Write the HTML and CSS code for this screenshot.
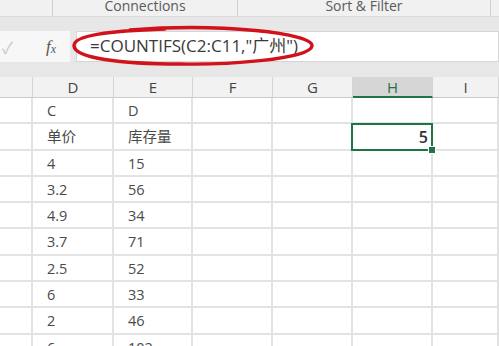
FILE: index.html
```html
<!DOCTYPE html>
<html lang="zh-CN">
<head>
  <meta charset="UTF-8" />
  <title>COUNTIFS</title>
  <link rel="stylesheet" href="styles.css">
</head>
<body>

  <div class="ribbon">
    <div class="grupo g-a"></div>
    <div class="grupo g-b">Connections</div>
    <div class="grupo g-c">Sort &amp; Filter</div>
    <div class="grupo g-d"></div>
  </div>

  <div class="barra">
    <div class="botoes">
      <span class="check">&#10003;</span>
      <span class="fx">f<sub>x</sub></span>
    </div>
    <div class="formula">=COUNTIFS(C2:C11,"广州")</div>
    <svg class="circulo" width="250" height="44" viewBox="0 0 250 44">
      <path d="M60 5 C150 -2 244 8 242 21 C240 35 150 40 110 39 C50 39 5 33 4 21 C3 10 40 6 95 4"
            fill="none" stroke="#d2121b" stroke-width="3.4" stroke-linecap="round" />
    </svg>
  </div>

  <div class="planilha">
    <div class="cab"></div>
    <div class="cab">D</div>
    <div class="cab">E</div>
    <div class="cab">F</div>
    <div class="cab">G</div>
    <div class="cab ativo">H</div>
    <div class="cab">I</div>

    <div class="cel"></div><div class="cel">C</div><div class="cel">D</div><div class="cel"></div><div class="cel"></div><div class="cel"></div><div class="cel"></div>
    <div class="cel"></div><div class="cel">单价</div><div class="cel">库存量</div><div class="cel"></div><div class="cel"></div><div class="cel sel">5<span class="alca"></span></div><div class="cel"></div>
    <div class="cel"></div><div class="cel">4</div><div class="cel">15</div><div class="cel"></div><div class="cel"></div><div class="cel"></div><div class="cel"></div>
    <div class="cel"></div><div class="cel">3.2</div><div class="cel">56</div><div class="cel"></div><div class="cel"></div><div class="cel"></div><div class="cel"></div>
    <div class="cel"></div><div class="cel">4.9</div><div class="cel">34</div><div class="cel"></div><div class="cel"></div><div class="cel"></div><div class="cel"></div>
    <div class="cel"></div><div class="cel">3.7</div><div class="cel">71</div><div class="cel"></div><div class="cel"></div><div class="cel"></div><div class="cel"></div>
    <div class="cel"></div><div class="cel">2.5</div><div class="cel">52</div><div class="cel"></div><div class="cel"></div><div class="cel"></div><div class="cel"></div>
    <div class="cel"></div><div class="cel">6</div><div class="cel">33</div><div class="cel"></div><div class="cel"></div><div class="cel"></div><div class="cel"></div>
    <div class="cel"></div><div class="cel">2</div><div class="cel">46</div><div class="cel"></div><div class="cel"></div><div class="cel"></div><div class="cel"></div>
    <div class="cel"></div><div class="cel">6</div><div class="cel">102</div><div class="cel"></div><div class="cel"></div><div class="cel"></div><div class="cel"></div>
  </div>

</body>
</html>
```

FILE: styles.css
```css
body {
  margin: 0;
  width: 499px;
  height: 346px;
  overflow: hidden;
  background: white;
  font-family: 'Open Sans', 'Noto Sans CJK SC', sans-serif;
  color: #444;
}

.ribbon {
  display: flex;
  height: 16px;
  background: #f1f1f1;
  border-bottom: 1px solid #d9d9d9;
}

.grupo {
  border-right: 1px solid #cfcfcf;
  font-size: 14px;
  line-height: 12px;
  color: #5a5a5a;
  text-align: center;
  overflow: hidden;
}

.g-a { width: 52px; }
.g-b { width: 184px; }
.g-c { width: 252px; }
.g-d { flex: 1; border-right: none; }

.barra {
  position: relative;
  display: flex;
  gap: 6px;
  height: 60px;
  padding-top: 14px;
  box-sizing: border-box;
  background: #e7e7e7;
}

.botoes {
  width: 70px;
  height: 31px;
  background: #f7f7f7;
  display: flex;
  align-items: center;
  justify-content: space-between;
  padding: 0 14px 0 2px;
  box-sizing: border-box;
}

.check {
  color: #c8c8c8;
  font-size: 16px;
}

.fx {
  font-family: 'Liberation Serif', serif;
  font-style: italic;
  font-size: 17px;
  color: #555;
}

.fx sub {
  font-size: 12px;
  vertical-align: -1px;
}

.formula {
  flex: 1;
  height: 31px;
  background: white;
  border: 1px solid #d6d6d6;
  box-sizing: border-box;
  padding-left: 13px;
  font-size: 17px;
  line-height: 27px;
  color: #3a3a3a;
}

.circulo {
  position: absolute;
  left: 70px;
  top: 8px;
}

.planilha {
  display: grid;
  grid-template-columns: 33px 81px 79px 80px 80px 80px 1fr;
  grid-template-rows: 21px repeat(10, 26.3px);
}

.cab {
  background: #f2f2f2;
  border-right: 1px solid #d4d4d4;
  border-bottom: 1px solid #cbcbcb;
  font-size: 15px;
  line-height: 20px;
  text-align: center;
  color: #444;
}

.cab.ativo {
  background: #d6d6d6;
  color: #217346;
  border-bottom: 2px solid #217346;
}

.cel {
  position: relative;
  border-right: 2px solid #e3e3e3;
  border-bottom: 2px solid #e3e3e3;
  padding-left: 14px;
  font-size: 14.5px;
  line-height: 25px;
  color: #4a4a4a;
  box-sizing: border-box;
}

.cel.sel {
  z-index: 1;
  border: 2px solid #217346;
  margin: -1px 0 0 -2px;
  text-align: right;
  padding-right: 3px;
  font-size: 16px;
  font-weight: 600;
  color: #333;
}

.alca {
  position: absolute;
  right: -5px;
  bottom: -5px;
  width: 6px;
  height: 6px;
  background: #217346;
  border: 1px solid white;
}
```
